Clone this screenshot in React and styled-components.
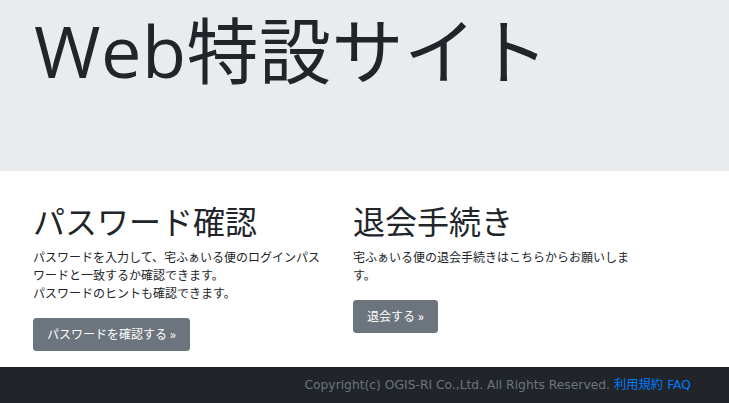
import React from "react";
import styled, { createGlobalStyle } from "styled-components";

const GlobalStyle = createGlobalStyle`
  html, body {
    margin: 0;
    padding: 0;
    background: #fff;
  }
  body {
    font-family: "Open Sans", "Noto Sans CJK JP", sans-serif;
    font-size: 12px;
    line-height: 1.5;
    color: #212529;
  }
  * { box-sizing: border-box; }
`;

const Jumbotron = styled.header`
  background: #e9ecef;
  height: 171px;
  padding: 7px 33px 0 34px;
`;

const DisplayTitle = styled.h1`
  margin: 0;
  font-size: 72px;
  font-weight: 400;
  line-height: 1.2;
  letter-spacing: 0.5px;
`;

const Main = styled.main`
  display: flex;
  padding: 32px 18px 0;
  height: 196px;
`;

const Column = styled.section`
  width: 320px;
  padding: 0 15px;
`;

const Heading = styled.h2`
  margin: 0 0 8px;
  font-size: 32px;
  font-weight: 400;
  line-height: 1.2;
`;

const Text = styled.p`
  margin: 0 0 15px;
  font-size: 12px;
  line-height: 18px;
`;

const Button = styled.a`
  display: inline-block;
  padding: 7px 13px 6px;
  font-size: 12px;
  line-height: 18px;
  color: #fff;
  background: #6c757d;
  border: 1px solid #6c757d;
  border-radius: 3px;
  text-decoration: none;
  cursor: pointer;
`;

const Footer = styled.footer`
  display: flex;
  justify-content: flex-end;
  align-items: center;
  height: 36px;
  padding: 0 38px 0 0;
  background: #212529;
  font-family: "DejaVu Sans", "Noto Sans CJK JP", sans-serif;
  font-size: 12.3px;
  color: #6c757d;
`;

const FooterLink = styled.a`
  color: #007bff;
  text-decoration: none;
  margin-left: 4px;
`;

export default function App() {
  return (
    <>
      <GlobalStyle />
      <Jumbotron>
        <DisplayTitle>Web特設サイト</DisplayTitle>
      </Jumbotron>
      <Main>
        <Column>
          <Heading>パスワード確認</Heading>
          <Text>
            パスワードを入力して、宅ふぁいる便のログインパスワードと一致するか確認できます。
            <br />
            パスワードのヒントも確認できます。
          </Text>
          <Button>パスワードを確認する &raquo;</Button>
        </Column>
        <Column>
          <Heading>退会手続き</Heading>
          <Text>宅ふぁいる便の退会手続きはこちらからお願いします。</Text>
          <Button>退会する &raquo;</Button>
        </Column>
      </Main>
      <Footer>
        <span>Copyright(c) OGIS-RI Co.,Ltd. All Rights Reserved.</span>
        <FooterLink>利用規約</FooterLink>
        <FooterLink>FAQ</FooterLink>
      </Footer>
    </>
  );
}
